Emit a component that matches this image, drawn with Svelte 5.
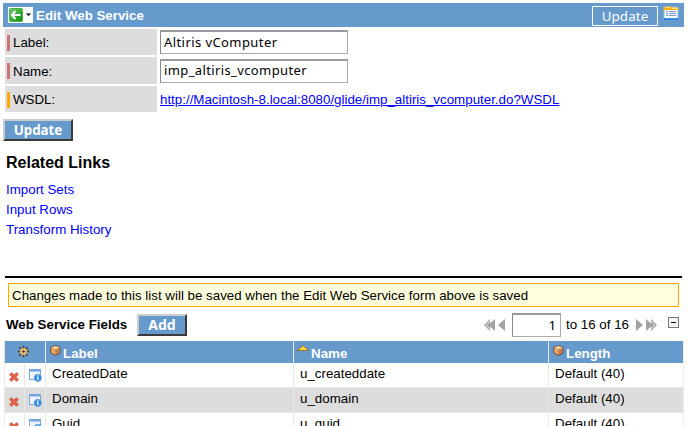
<script>
  const links = ['Import Sets', 'Input Rows', 'Transform History'];
  const rows = [
    { label: 'CreatedDate', name: 'u_createddate', length: 'Default (40)' },
    { label: 'Domain', name: 'u_domain', length: 'Default (40)' },
    { label: 'Guid', name: 'u_guid', length: 'Default (40)' },
  ];
</script>

{#snippet cube()}
  <svg class="cube" width="11" height="11" viewBox="0 0 11 11">
    <path d="M5.5.5 10 2.3v5.6L5.5 10.5.8 8V2.3Z" fill="#c58145" stroke="#5a3a26" stroke-width=".8" />
    <path d="M1.2 2.6 5.5.9l4.2 1.7-4.2 2Z" fill="#f8d3a0" />
    <path d="m1.3 3.1 4 1.8v4.9L1.3 7.7Z" fill="#e5a66c" />
    <path d="M5.9 4.9 9.6 3.2v4.4L5.9 9.7Z" fill="#c08050" />
  </svg>
{/snippet}

<main>
  <header>
    <div class="back">
      <svg width="25" height="16" viewBox="0 0 25 16">
        <defs><linearGradient id="green" x2="1" y2="1"><stop stop-color="#6fce6f" /><stop offset="1" stop-color="#089008" /></linearGradient></defs>
        <rect width="25" height="16" fill="#fff" />
        <rect x="1.5" y="1.5" width="13" height="13" rx="1" fill="url(#green)" stroke="#43ae43" />
        <path d="M7.5 4 3.8 8l3.7 4M4.2 8h8.3" fill="none" stroke="#fff" stroke-width="1.9" />
        <path d="M18 6.5h5L20.5 9Z" fill="#000" />
      </svg>
    </div>
    <h1>Edit Web Service</h1>
    <button class="top-update">Update</button>
    <svg class="form-icon" width="16" height="14" viewBox="0 0 16 14">
      <rect x="1" y="1" width="14" height="12" rx="1" fill="#f5faff" stroke="#8abcf0" />
      <path d="M.5 4V1.5L1.5.5H8l1 1h6.5V4Z" fill="#ffb00d" />
      <path d="M2 1.5h5M9 2.5h6" stroke="#ffe17a" />
      <path d="M3 5.5h2M6 5.5h7M3 7.5h2M6 7.5h7M3 9.5h2M6 9.5h7" stroke="#7895cf" />
      <path d="M1 13h14" stroke="#1675df" stroke-width="1.5" />
    </svg>
  </header>

  <section class="form">
    <div class="field r1"><label for="label"><i></i>Label:</label><input id="label" class="in1" value="Altiris vComputer" /></div>
    <div class="field r2"><label for="name"><i></i>Name:</label><input id="name" class="in2" value="imp_altiris_vcomputer" /></div>
    <div class="field r3"><span class="caption"><i class="orange"></i>WSDL:</span><a href="#wsdl">http://Macintosh-8.local:8080/glide/imp_altiris_vcomputer.do?WSDL</a></div>
  </section>
  <button class="raised update">Update</button>

  <h2>Related Links</h2>
  <nav>
    {#each links as link}<a href="#related">{link}</a>{/each}
  </nav>

  <hr />
  <div class="notice">Changes made to this list will be saved when the Edit Web Service form above is saved</div>

  <div class="toolbar">
    <h3>Web Service Fields</h3>
    <button class="raised add">Add</button>
    <svg class="prev" width="22" height="12" viewBox="0 0 22 12">
      <path d="M6 0v12L0 6ZM11 0v12L4 6ZM21 0v12l-7-6Z" fill="#a2a2a2" />
      <path d="m7.4.5-5 5.5 5 5.5" fill="none" stroke="#fff" stroke-width=".7" />
    </svg>
    <input class="page" value="1" />
    <span class="count">to 16 of 16</span>
    <svg class="next" width="22" height="12" viewBox="0 0 22 12">
      <path d="m1 0 7 6-7 6ZM11 0l7 6-7 6ZM16 0l6 6-6 6Z" fill="#a2a2a2" />
      <path d="m14.6.5 5 5.5-5 5.5" fill="none" stroke="#fff" stroke-width=".7" />
    </svg>
    <svg class="collapse" width="11" height="11" viewBox="0 0 11 11">
      <rect x=".5" y=".5" width="10" height="10" fill="#f5f5f5" stroke="#777" />
      <path d="M3 5.5h5" stroke="#000" />
    </svg>
  </div>

  <div class="table">
    <div class="row head">
      <div class="gear">
        <svg width="11" height="11" viewBox="0 0 11 11">
          <path d="M5.5 0v11M0 5.5h11M1.5 1.5l8 8M9.5 1.5l-8 8" stroke="#302719" stroke-width="1.6" />
          <circle cx="5.5" cy="5.5" r="3.6" fill="#fbe3b0" stroke="#c9964c" />
          <path d="M5.5 2v7M2 5.5h7M3 3l5 5M8 3 3 8" stroke="#a87a3c" stroke-width=".6" />
          <circle cx="5.5" cy="5.5" r="1.1" fill="#2f2b29" />
        </svg>
      </div>
      <div class="th">{@render cube()}<span>Label</span></div>
      <div class="th name">
        <svg width="14" height="6" viewBox="0 0 14 6"><path d="M0 6 7 0l7 6Z" fill="#957442" /><path d="M2.5 5.1 7 1l4.5 4.1Z" fill="#ffdc42" /></svg>
        <span>Name</span>
      </div>
      <div class="th len">{@render cube()}<span>Length</span></div>
    </div>
    {#each rows as row}
      <div class="row body">
        <div class="del">
          <svg width="10" height="10" viewBox="0 0 10 10"><path d="m1.3 1.3 7.4 7.4m0-7.4L1.3 8.7" stroke="#c74631" stroke-width="3.2" /><path d="m1.5 1.5 7 7m0-7-7 7" stroke="#e7664d" stroke-width="2" /></svg>
        </div>
        <div class="open">
          <svg width="13" height="13" viewBox="0 0 13 13">
            <rect x=".5" y=".5" width="11" height="10" fill="#eef5ff" stroke="#80a7dc" />
            <path d="M1 1.5h10" stroke="#6fa3e2" stroke-width="2" />
            <circle cx="8.8" cy="8.8" r="3.6" fill="#3a8de0" stroke="#5c9fe0" stroke-width=".8" />
            <path d="M8.8 6.2v1.2m0 .6v3" stroke="#fff" stroke-width="1.2" />
          </svg>
        </div>
        <div class="td">{row.label}</div>
        <div class="td name">{row.name}</div>
        <div class="td len">{row.length}</div>
      </div>
    {/each}
  </div>
</main>

<style>
  :global(body) { margin: 0; background: #fff; overflow: hidden; }
  main { width: 688px; height: 426px; overflow: hidden; box-sizing: border-box; padding: 3px 4px 0 3px; font: 13.333px/18px "Liberation Sans", Arial, sans-serif; color: #000; }
  main *, main { box-sizing: border-box; }
  svg { display: block; flex: none; }
  h1, h2, h3 { margin: 0; white-space: nowrap; }
  button { font-family: "Noto Sans", "Open Sans", sans-serif; color: #fff; background: #6699cc; padding: 0; flex: none; display: flex; align-items: center; justify-content: center; white-space: nowrap; }
  input { font: 13px/18px "Noto Sans", "Open Sans", sans-serif; color: #000; border: 1px solid #aaa; border-top: 2px solid #999; border-left-color: #888; border-radius: 0; background: #fff; outline: none; }
  header { height: 24px; width: 681px; background: #6699cc; display: flex; align-items: flex-start; color: #fff; }
  .back { margin: 4px 0 0 5px; width: 25px; }
  h1 { font-size: 13.333px; line-height: 24px; margin: 1px 0 0 3px; }
  .top-update { width: 66px; height: 20px; border: 1px solid #fff; margin: 3px 5px 0 auto; font-size: 13.333px; line-height: 18px; letter-spacing: .1px; }
  .form-icon { margin: 3px 5px 0 0; }
  .form { margin: 2px 0 0 2px; display: flex; flex-direction: column; }
  .field { display: flex; height: 26px; margin-bottom: 2px; align-items: center; }
  .field.r2 { height: 27px; }
  .field.r3 { margin-bottom: 0; }
  label, .caption { display: flex; width: 152px; height: 100%; align-items: center; background: #ddd; padding: 2px 0 0 2px; flex: none; }
  i { width: 3px; height: 16px; background: #cd7478; margin: -1px 3px 0 0; }
  .orange { background: #ffa500; }
  .field input { width: 188px; height: 24px; margin-left: 3px; padding: 0 3px 2px; }
  .in1 { letter-spacing: .42px; }
  .in2 { letter-spacing: .38px; }
  .field a { color: #00f; margin-left: 3px; padding-top: 2px; white-space: nowrap; }
  .raised { height: 22px; border: 2px solid; border-color: #ccc #3b3b3b #3b3b3b #ccc; font-weight: bold; font-size: 13.333px; line-height: 18px; }
  .update { width: 70px; margin-top: 7px; }
  h2 { font-size: 16px; line-height: 20px; margin: 12px 0 0 3px; }
  nav { display: flex; flex-direction: column; margin: 7px 0 0 3px; align-items: flex-start; }
  nav a { color: #00f; text-decoration: none; line-height: 20px; }
  hr { border: 0; height: 2px; width: 677px; background: #000; margin: 36px 0 5px 2px; }
  .notice { margin-left: 5px; width: 671px; height: 24px; border: 1px solid #ffa500; background: #ffffdd; padding-left: 3px; line-height: 23px; white-space: nowrap; }
  .toolbar { display: flex; height: 34px; align-items: flex-start; padding-left: 3px; }
  h3 { font-size: 13.333px; line-height: 22px; width: 131px; margin-top: 7px; }
  .add { width: 50px; margin-top: 7px; font-size: 14px; }
  .prev { margin: 12px 0 0 297px; }
  .page { width: 49px; height: 24px; margin: 6px 0 0 6px; text-align: right; padding: 0 4px 2px; font-size: 13.333px; }
  .count { margin: 9px 0 0 5px; width: 66px; white-space: nowrap; }
  .next { margin: 12px 0 0 3px; }
  .collapse { margin: 10px 0 0 11px; }
  .table { margin-left: 1px; width: 680px; border-right: 1px solid #eee; }
  .row { display: grid; grid-template-columns: 20px 21px 248px 255px 1fr; height: 25px; border-bottom: 1px solid #e8e8e8; }
  .row > div { border-left: 1px solid #e8e8e8; }
  .head { height: 22px; background: #6699cc; border: 0; color: #fff; font-weight: bold; }
  .gear { grid-column: span 2; padding: 5px 0 0 13px; }
  .th { display: flex; align-items: flex-start; padding-left: 4px; }
  .th span { margin: 4px 0 0 2px; line-height: 17px; }
  .th .cube { margin-top: 4px; }
  .th.name svg { margin-top: 4px; }
  .th.name { padding-left: 2px; }
  .th.name span { margin-left: 1px; }
  .body:nth-child(odd) { background: #ddd; }
  .del { padding: 9px 0 0 4px; }
  .open { padding: 6px 0 0 4px; }
  .td { padding-left: 6px; line-height: 21px; white-space: nowrap; }
</style>
